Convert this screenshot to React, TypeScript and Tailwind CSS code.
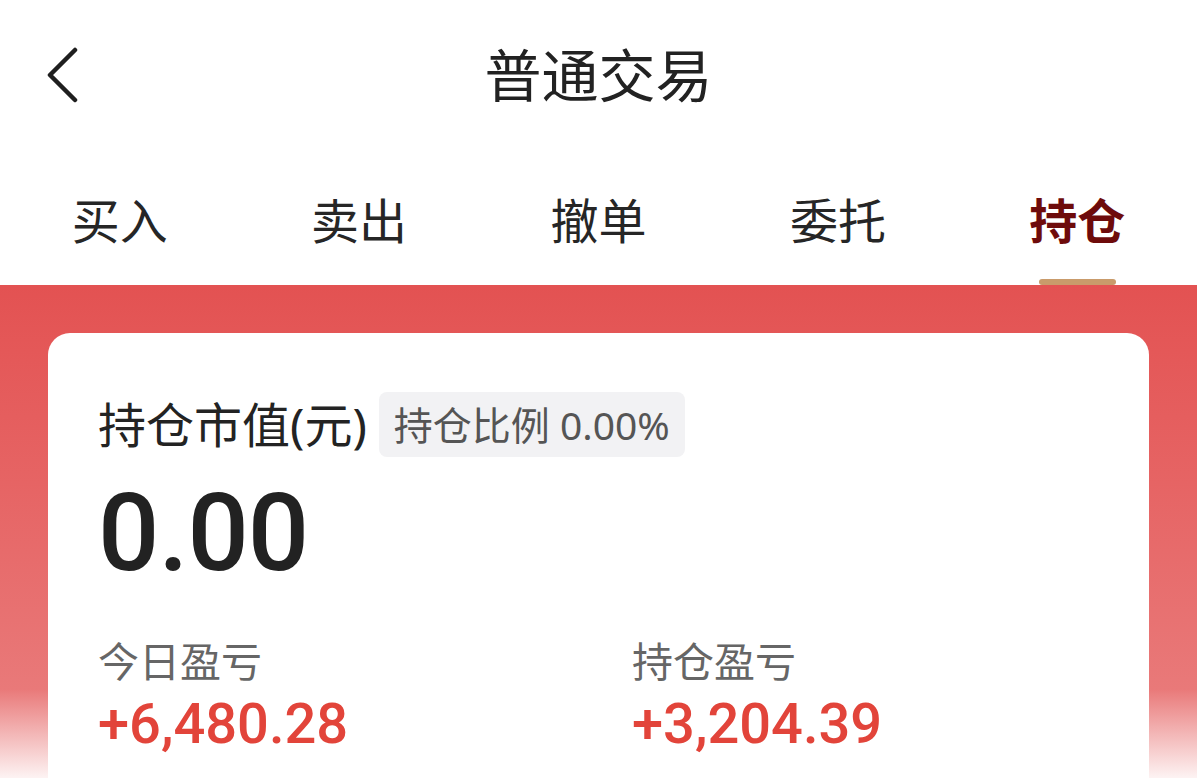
const cjk = "font-['Noto_Sans','Noto_Sans_CJK_SC',sans-serif]";
const num = "font-['Roboto','Noto_Sans_CJK_SC',sans-serif]";

const tabs = ["买入", "卖出", "撤单", "委托", "持仓"];

function BackIcon() {
  return (
    <svg width="34" height="56" viewBox="0 0 34 56" fill="none">
      <path
        d="M29 3 L4 28 L29 53"
        stroke="#1f1f1f"
        strokeWidth="4.5"
        strokeLinecap="round"
        strokeLinejoin="round"
      />
    </svg>
  );
}

export default function App() {
  const active = 4;
  return (
    <div className={`h-[778px] w-[1197px] overflow-hidden bg-white ${cjk}`}>
      <div className="grid h-[150px] grid-cols-[1fr_auto_1fr] items-center">
        <div className="pl-[46px]">
          <BackIcon />
        </div>
        <h1 className="text-[57px] leading-none text-[#222]">普通交易</h1>
        <div />
      </div>

      <div className="flex h-[135px]">
        {tabs.map((t, i) => (
          <div key={t} className="flex flex-1 flex-col items-center justify-end">
            <span
              className={
                i === active
                  ? "text-[48px] font-bold leading-none text-[#6e0b0b]"
                  : "text-[48px] leading-none text-[#262626]"
              }
            >
              {t}
            </span>
            <div
              className={
                i === active
                  ? "mt-[34px] h-[6px] w-[77px] rounded-full bg-[#c99b6b]"
                  : "mt-[34px] h-[6px] w-[77px]"
              }
            />
          </div>
        ))}
      </div>

      <div className="h-[493px] bg-[linear-gradient(180deg,#e35252_0%,#e66464_40%,#e97979_82%,#fdf3f3_100%)] px-[48px] pt-[48px]">
        <div className="h-[500px] rounded-[22px] bg-white pl-[50px] pt-[59px]">
          <div className="flex items-center gap-[12px]">
            <span className="text-[48px] leading-none text-[#232323]">持仓市值(元)</span>
            <span className="flex h-[65px] items-center rounded-[8px] bg-[#f2f2f4] px-[15px] text-[39px] leading-none text-[#555]">
              持仓比例 0.00%
            </span>
          </div>
          <div className={`${num} mt-[22px] text-[108px] font-medium leading-none tracking-[-1px] text-[#222]`}>
            0.00
          </div>
          <div className="mt-[54px] flex">
            <div className="w-[534px]">
              <div className="text-[41px] leading-none text-[#666]">今日盈亏</div>
              <div className={`${num} mt-[14px] text-[56px] font-medium leading-none text-[#e2443a]`}>
                +6,480.28
              </div>
            </div>
            <div>
              <div className="text-[41px] leading-none text-[#666]">持仓盈亏</div>
              <div className={`${num} mt-[14px] text-[56px] font-medium leading-none text-[#e2443a]`}>
                +3,204.39
              </div>
            </div>
          </div>
        </div>
      </div>
    </div>
  );
}
